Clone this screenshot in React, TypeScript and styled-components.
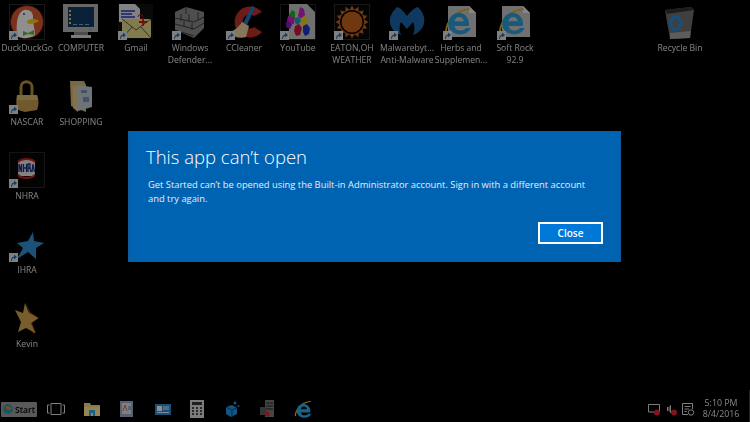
import React from 'react'
import styled, { createGlobalStyle } from 'styled-components'

const Global = createGlobalStyle`
  html, body { margin: 0; padding: 0; background: #000; }
  body { font-family: 'Open Sans', 'Noto Sans', sans-serif; }
`
const Screen = styled.div`
  position: relative;
  width: 750px;
  height: 422px;
  overflow: hidden;
  background: #000;
  display: flex;
  flex-direction: column;
`
const Desktop = styled.div`
  position: relative;
  flex: 1;
  filter: brightness(0.56);
`
const Item = styled.div<{ $x: number; $y: number }>`
  position: absolute;
  left: ${(p) => p.$x - 30}px;
  top: ${(p) => p.$y}px;
  width: 60px;
  display: flex;
  flex-direction: column;
  align-items: center;
`
const IconBox = styled.div`
  position: relative;
  width: 36px;
  height: 36px;
`
const Label = styled.div`
  margin-top: 2px;
  width: 66px;
  flex: none;
  color: #e6e6e6;
  font-size: 8.6px;
  line-height: 12px;
  text-align: center;
  white-space: pre;
`
const Shortcut = styled.svg`
  position: absolute;
  left: 0;
  bottom: 0;
`
const Dialog = styled.div`
  position: absolute;
  left: 128px;
  top: 131px;
  width: 493px;
  height: 131px;
  box-sizing: border-box;
  padding: 13px 17px 17px 17px;
  background: #0063b1;
  border: 1px solid #0f5a9b;
  color: #fff;
  display: flex;
  flex-direction: column;
`
const Title = styled.h1`
  margin: 0;
  font-size: 18.5px;
  line-height: 24px;
  font-weight: 300;
`
const Message = styled.p`
  margin: 9px 0 0 2px;
  width: 445px;
  font-size: 9.37px;
  line-height: 14px;
  color: #e4eef7;
`
const Actions = styled.div`
  margin-top: auto;
  display: flex;
  justify-content: flex-end;
`
const CloseButton = styled.button`
  width: 65px;
  height: 22px;
  box-sizing: border-box;
  padding: 0;
  background: #0078d7;
  border: 2px solid #fff;
  color: #fff;
  font-family: inherit;
  font-size: 10px;
  font-weight: 600;
`
const Taskbar = styled.div`
  height: 32px;
  flex: none;
  box-sizing: border-box;
  padding: 7px 0 1px 1px;
  display: flex;
  align-items: center;
  filter: brightness(0.62);
  border-right: 1px solid #333;
`
const StartButton = styled.div`
  width: 36px;
  height: 15px;
  background: #8f8f8f;
  border-radius: 1px;
  display: flex;
  align-items: center;
  gap: 2px;
  padding-left: 2px;
  box-sizing: border-box;
  color: #000;
  font-size: 8.5px;
  font-weight: 600;
`
const Apps = styled.div`
  margin-left: 10px;
  display: flex;
  align-items: center;
  gap: 17.5px;
`
const Tray = styled.div`
  margin-left: auto;
  display: flex;
  align-items: center;
  gap: 3px;
  padding-right: 6px;
`
const Clock = styled.div`
  margin-left: 1px;
  width: 44px;
  color: #d8d8d8;
  font-size: 8.8px;
  line-height: 11px;
  text-align: center;
`

const Arrow = () => (
  <Shortcut width="9" height="9" viewBox="0 0 9 9">
    <rect width="9" height="9" fill="#e4e4e4" />
    <path d="M2 8 C2 5 3 3.6 5 3.4 L5 1.6 L8 4 L5 6.4 L5 5 C3.8 5 3 6 3 8 Z" fill="#2a6fb0" />
  </Shortcut>
)

const Svg = styled.svg`
  display: block;
`
const Icon: React.FC<{ children: React.ReactNode }> = ({ children }) => (
  <Svg width={36} height={36} viewBox="0 0 36 36">
    {children}
  </Svg>
)

const Duck = () => (
  <Icon>
    <rect x="0.5" y="0.5" width="35" height="35" fill="none" stroke="#2c2c2c" />
    <circle cx="18" cy="18" r="16.5" fill="#de5833" stroke="#4a1608" strokeWidth="1" />
    <path d="M8 32 C7 20 8 8 15 6 C20 5 25 8 24 15 C24 20 26 25 26 31 C20 35 12 35 8 32 Z" fill="#fff" />
    <circle cx="15" cy="10" r="1" fill="#2d4f8e" />
    <path d="M18 17 C22 14 28 15 30 17 C27 19 24 20 19 20 Z" fill="#fdd20a" />
    <path d="M14 27 L19 29 L25 26 L25 31 L19 30 L14 32 Z" fill="#65bc46" />
  </Icon>
)
const Computer = () => (
  <Icon>
    <rect x="0" y="0" width="35" height="28" fill="#b8b8b8" />
    <rect x="5" y="3" width="26" height="20" fill="#123d66" />
    <path d="M6 6h2v2H6zM6 10h2v2H6zM6 14h2v2H6zM6 18h2v2H6z" fill="#e8d44c" />
    <path d="M10 20h4v1h-4zM16 20h4v1h-4zM22 20h4v1h-4z" fill="#8ab" />
    <rect x="11" y="28" width="14" height="3" fill="#888" />
    <rect x="8" y="31" width="20" height="3" fill="#ddd" />
    <rect x="26" y="25" width="3" height="1" fill="#5c5" />
  </Icon>
)
const Gmail = () => (
  <Icon>
    <rect x="0" y="0" width="35" height="35" fill="#101010" />
    <path d="M1 0H17L22 5V18H1Z" fill="#e8e8e8" />
    <path d="M3 7H17M3 10H14M3 13H17" stroke="#2838c0" strokeWidth="1.6" />
    <path d="M4 15H33V34H4Z" fill="#e8dc8c" />
    <path d="M4 15L18 26L33 15M4 34L14 23M33 34L23 23" stroke="#555" fill="none" />
    <path d="M25 14V22M21 18H29" stroke="#d01818" strokeWidth="1.8" />
    <path d="M20 13a2.5 2.5 0 0 1 5 0" stroke="#d01818" fill="none" />
  </Icon>
)
const Wall = () => (
  <Icon>
    <path d="M3 8L14 3L32 8V24L22 34L3 26Z" fill="#8c8c8c" />
    <path d="M3 14L22 18L32 13M3 20L22 25L32 19M3 26L22 32M14 3V10M9 10V17M17 10V18M12 17V23M20 19V26M26 8V16" stroke="#3c3c3c" fill="none" />
  </Icon>
)
const CCleaner = () => (
  <Icon>
    <path d="M36 8 A15.500 15.500 0 1 0 36 28 L28 23 A7 7 0 1 1 28 12 Z" fill="#c03228" />
    <path d="M17 19L26 2L29 3.500L21 21Z" fill="#2277c8" />
    <path d="M16 18L23 22L20 33C14 35 7 33 1 28C7 28 12 24 16 18Z" fill="#ecd4a4" />
  </Icon>
)
const Gems = () => (
  <Icon>
    <rect x="0.5" y="0.5" width="35" height="35" fill="none" stroke="#262626" />
    <path d="M9 0H27L35 8V35H9Z" fill="#c8c8c8" />
    <path d="M8 12l4-3 3 4-1 7-4 1-3-4zM20 3l4 2 1 6-4 4-3-3z" fill="#d020c8" />
    <path d="M12 6l3 2 0 5-3 1-3-3z" fill="#20b020" />
    <path d="M15 14l4-1 2 4-3 4-3-2z" fill="#18a0c0" />
    <path d="M21 14l4-2 3 4-2 5-4 0z" fill="#f0d018" />
    <path d="M15 22l4-2 3 4-2 7-4 1-2-5z" fill="#d01838" />
    <path d="M23 22l4-2 3 4-1 6-4 2-2-4z" fill="#1838d0" />
    <path d="M6 18l3-1 3 4-2 4-4-2z" fill="#8020c0" />
  </Icon>
)
// spiky ring of the weather icon
const sunRays = Array.from({ length: 32 }, (_, i) => {
  const r = i % 2 === 0 ? 16.5 : 12.5
  const a = (i / 32) * Math.PI * 2 - Math.PI / 2
  return `${(18 + r * Math.cos(a)).toFixed(1)},${(18 + r * Math.sin(a)).toFixed(1)}`
}).join(' ')
const Sun = () => (
  <Icon>
    <rect x="0.5" y="0.5" width="35" height="35" fill="#080808" stroke="#2c2c2c" />
    <polygon points={sunRays} fill="#c8641c" />
    <circle cx="18" cy="18" r="12" fill="#000" />
    <circle cx="18" cy="18" r="10.500" fill="#c8641c" />
  </Icon>
)
const Malware = () => (
  <Icon>
    <path
      d="M8 3 C12 4 15 8 18 12 C21 8 25 4 29 3 C34 8 36 13 35 19 C34 25 29 29 24 31 C26 27 26 22 24 18 L18 25 L12 18 C10 22 10 27 12 31 C7 29 2 25 1 19 C0 13 3 8 8 3 Z"
      fill="#1a66ad"
    />
  </Icon>
)
const IeLetter: React.FC<{ s?: number; x?: number; y?: number }> = ({ s = 1, x = 0, y = 0 }) => (
  <g transform={`translate(${x} ${y}) scale(${s})`}>
    <path d="M2 26 C3 14 12 4 27 2" stroke="#d8b030" strokeWidth="2" fill="none" />
    <path
      d="M15 6 A11.500 11.500 0 0 1 26 20 H11 C12 26 20 26 23 22 H28 C25 31 8 31 5 21 C3 13 8 7 15 6 Z M11 15 H21 C20 9 12 9 11 15 Z"
      fill="#2aa0dc"
      fillRule="evenodd"
    />
  </g>
)
const IePage = () => (
  <Icon>
    <path d="M5 2H26L33 9V33H5Z" fill="#c8c8c8" />
    <path d="M26 2V9H33Z" fill="#efefef" />
    <IeLetter s={0.95} x={1} y={3} />
  </Icon>
)
const Lock = () => (
  <Icon>
    <path d="M12 18V9C12 2 23 2 23 9V18" fill="none" stroke="#b8923c" strokeWidth="3" />
    <path d="M8 17H28C30 22 30 27 28 32L16 34C12 33 9 32 8 31C7 26 7 21 8 17Z" fill="#c8a050" />
    <path d="M8 17H28L29 22H8Z" fill="#e0bc70" />
  </Icon>
)
const Folder = () => (
  <Icon>
    <path d="M7 3H21L23 7V34L8 28Z" fill="#d8bc78" />
    <path d="M14 7L29 9V29L15 33Z" fill="#c4ccd8" />
    <path d="M18 12h6v3h-6zM20 19h6v5h-6z" fill="#7c90b4" />
    <path d="M10 8 L15 8 V34 L10 30Z" fill="#e6cc88" />
  </Icon>
)
const Nhra = () => (
  <Icon>
    <rect x="0.5" y="0.5" width="35" height="35" fill="#050505" stroke="#262626" />
    <rect x="9" y="8" width="17" height="16" rx="3" fill="#e8e8e8" />
    <path d="M9 10C13 6 22 6 26 10M9 23C13 27 22 27 26 23" stroke="#d02020" strokeWidth="2" fill="none" />
    <path d="M10 20V12L12.500 20V12M14.500 12V20M17.500 12V20M14.500 16H17.500M19 20V12H21V16H19M21 16L22 20M23 20L24 12L25.500 20" stroke="#1c2f80" strokeWidth="1.300" fill="none" />
  </Icon>
)
const GoldStar = () => (
  <Icon>
    <path d="M17 3L21 12L30 18L23 23L27 33L24 33L20 12Z" fill="#a0401c" />
    <path d="M16 3L20 13L29 18L22 23L26 33L17 28L9 32L12 22L6 10L14 13Z" fill="#d8a850" />
  </Icon>
)
const BlueStar = () => (
  <Icon>
    <path d="M24 6L25 15L35 17L27 22L27 33L19 26L8 33L14 22L8 17L19 15Z" fill="#2f93d6" />
  </Icon>
)
const Bin = () => (
  <Icon>
    <path d="M3 6L29 3L32 6L28 34L8 35Z" fill="#707070" />
    <path d="M3 6L29 3L32 6L5 10Z" fill="#343434" />
    <path d="M8 29L28.800 27L28 34L8 35Z" fill="#a4a4a4" />
    <path d="M8 19L11 13H16L19 19L16 25H11Z" fill="none" stroke="#2a8ee0" strokeWidth="3" />
  </Icon>
)

type Entry = { x: number; y: number; label: string; icon: React.ReactNode; link?: boolean }
const entries: Entry[] = [
  { x: 27, y: 4, label: 'DuckDuckGo', icon: <Duck />, link: true },
  { x: 81, y: 4, label: 'COMPUTER', icon: <Computer /> },
  { x: 136, y: 4, label: 'Gmail', icon: <Gmail />, link: true },
  { x: 190, y: 4, label: 'Windows\nDefender...', icon: <Wall />, link: true },
  { x: 244, y: 4, label: 'CCleaner', icon: <CCleaner />, link: true },
  { x: 298, y: 4, label: 'YouTube', icon: <Gems />, link: true },
  { x: 352, y: 4, label: 'EATON,OH\nWEATHER', icon: <Sun />, link: true },
  { x: 407, y: 4, label: 'Malwarebyt...\nAnti-Malware', icon: <Malware />, link: true },
  { x: 461, y: 4, label: 'Herbs and\nSupplemen...', icon: <IePage />, link: true },
  { x: 515, y: 4, label: 'Soft Rock\n92.9', icon: <IePage />, link: true },
  { x: 680, y: 4, label: 'Recycle Bin', icon: <Bin /> },
  { x: 27, y: 78, label: 'NASCAR', icon: <Lock />, link: true },
  { x: 81, y: 78, label: 'SHOPPING', icon: <Folder /> },
  { x: 27, y: 152, label: 'NHRA', icon: <Nhra />, link: true },
  { x: 27, y: 226, label: 'IHRA', icon: <BlueStar />, link: true },
  { x: 27, y: 300, label: 'Kevin', icon: <GoldStar /> },
]

const TaskSvg: React.FC<{ w?: number; children: React.ReactNode }> = ({ w = 18, children }) => (
  <Svg width={w} height="18" viewBox={`0 0 ${w} 18`}>
    {children}
  </Svg>
)

const taskIcons = [
  <TaskSvg key="view">
    <path d="M4 3.500H14V14.500H4ZM2.500 5H0.500V13H2.500M15.500 5H17.500V13H15.500" fill="none" stroke="#d0d0d0" />
  </TaskSvg>,
  <TaskSvg key="folder">
    <path d="M1 3H7L8 5H17V16H1Z" fill="#e2c676" />
    <path d="M1 7H17V16H1Z" fill="#f0d688" />
    <path d="M6 10H12V16H10V13H8V16H6Z" fill="#2a9ad8" />
  </TaskSvg>,
  <TaskSvg key="doc">
    <path d="M2 1H15V17H2Z" fill="#8c9cb8" />
    <path d="M4 3H13V14H4Z" fill="#c8d0dc" />
    <path d="M5 11L7 5L9 11" stroke="#d06030" fill="none" />
    <path d="M10 7H13M10 9H13" stroke="#5070a0" />
  </TaskSvg>,
  <TaskSvg key="card">
    <rect x="1" y="4" width="16" height="11" fill="#2a80c0" />
    <rect x="3" y="6" width="5" height="5" fill="#e0e8f0" />
    <path d="M9 7H15M9 9H15M3 12.500H15" stroke="#d0e0f0" />
  </TaskSvg>,
  <TaskSvg key="calc" w={16}>
    <rect x="1" y="0" width="14" height="18" fill="#c8c8c8" />
    <rect x="3" y="2" width="10" height="3" fill="#333" />
    <path d="M3 7h2v2H3zM7 7h2v2H7zM11 7h2v2h-2zM3 10h2v2H3zM7 10h2v2H7zM11 10h2v2h-2zM3 13h2v2H3zM7 13h2v2H7zM11 13h2v2h-2z" fill="#444" />
  </TaskSvg>,
  <TaskSvg key="gem">
    <path d="M3 7L9 5L14 8L14 14L8 17L3 14Z" fill="#1f8ad0" />
    <path d="M3 7L9 10L14 8M9 10V17" stroke="#0c4c80" fill="none" />
    <circle cx="12" cy="3" r="1.500" fill="#1f8ad0" />
    <circle cx="15.500" cy="6" r="1" fill="#1f8ad0" />
  </TaskSvg>,
  <TaskSvg key="server">
    <path d="M7 0H16V17H7Z" fill="#707070" />
    <path d="M8 3H15M8 6H15M8 9H15" stroke="#222" />
    <path d="M2 7H8V15H2Z" fill="#555" />
    <circle cx="9" cy="14" r="2.500" fill="#d02030" />
  </TaskSvg>,
  <TaskSvg key="ie">
    <IeLetter s={0.62} x={0} y={0} />
  </TaskSvg>,
]

export default function App() {
  return (
    <Screen>
      <Global />
      <Desktop>
        {entries.map((e) => (
          <Item key={e.label} $x={e.x} $y={e.y}>
            <IconBox>
              {e.icon}
              {e.link && <Arrow />}
            </IconBox>
            <Label>{e.label}</Label>
          </Item>
        ))}
      </Desktop>
      <Taskbar>
        <StartButton>
          <Svg width="10" height="10" viewBox="0 0 9 9">
            <circle cx="4.500" cy="4.500" r="4.500" fill="#1f8f9c" />
            <path d="M2 3C4 1 7 2 8 4C6 6 3 6 2 3Z" fill="#d07040" />
          </Svg>
          Start
        </StartButton>
        <Apps>{taskIcons}</Apps>
        <Tray>
          <Svg width="14" height="14" viewBox="0 0 14 14">
            <path d="M1.500 2.500H12.500V9M1.500 2.500V10H7" fill="none" stroke="#ccc" />
            <circle cx="10" cy="10.500" r="3" fill="#d02030" />
          </Svg>
          <Svg width="14" height="14" viewBox="0 0 14 14">
            <path d="M3 5H4.500V9H3ZM5.500 4L7 3V11L5.500 10Z" fill="#ccc" />
            <circle cx="10" cy="10.500" r="3" fill="#d02030" />
          </Svg>
          <Svg width="14" height="14" viewBox="0 0 14 14">
            <path d="M1.500 1.500H11.500V7M1.500 1.500V12.500H7M3.500 4.500H9.500M3.500 7H8M3.500 9.500H6" fill="none" stroke="#ccc" />
            <circle cx="10" cy="10.500" r="2.700" fill="none" stroke="#ccc" />
          </Svg>
          <Clock>
            5:10 PM
            <br />
            8/4/2016
          </Clock>
        </Tray>
      </Taskbar>
      <Dialog>
        <Title>This app can’t open</Title>
        <Message>
          Get Started can’t be opened using the Built-in Administrator account. Sign in with a different account and try again.
        </Message>
        <Actions>
          <CloseButton>Close</CloseButton>
        </Actions>
      </Dialog>
    </Screen>
  )
}
